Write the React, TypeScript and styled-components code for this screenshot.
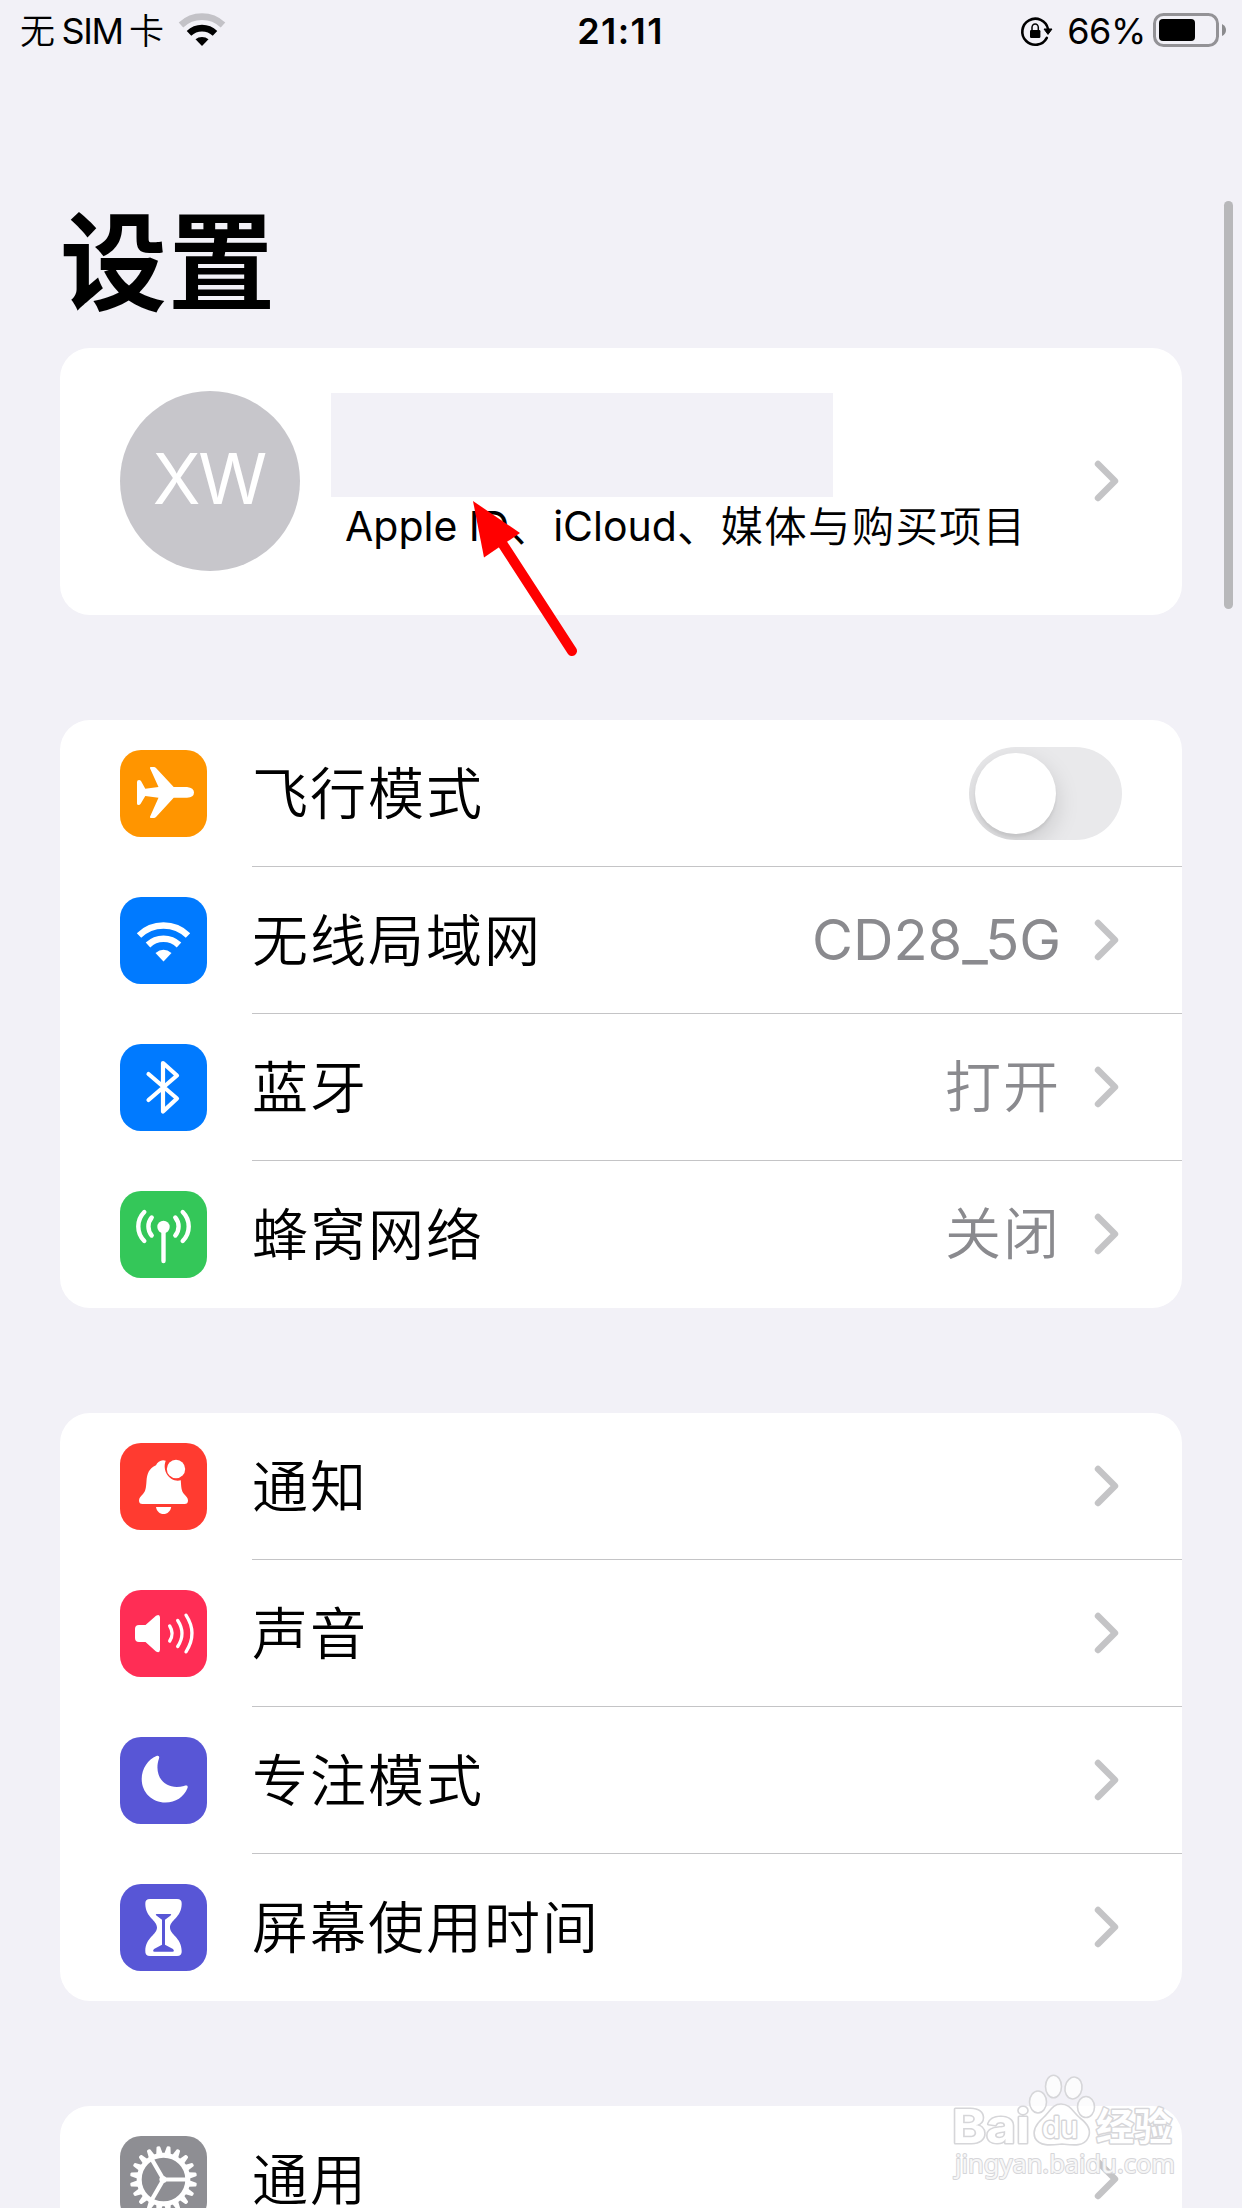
import React from "react";
import styled, { createGlobalStyle } from "styled-components";

const Global = createGlobalStyle`
  *, *::before, *::after { box-sizing: border-box; }
  body { margin: 0; background: #f2f1f7; }
`;

const Screen = styled.div`
  position: relative;
  width: 1242px;
  height: 2208px;
  overflow: hidden;
  background: #f2f1f7;
  color: #000;
  font-family: Inter, "Noto Sans CJK SC", sans-serif;
  -webkit-font-smoothing: antialiased;
`;

const StatusBar = styled.header`
  display: grid;
  grid-template-columns: 1fr auto 1fr;
  align-items: center;
  height: 62px;
  padding: 0 16px 0 20px;
`;

const StatusSide = styled.div<{ $end?: boolean }>`
  display: flex;
  align-items: center;
  justify-content: ${(p) => (p.$end ? "flex-end" : "flex-start")};
`;

const Carrier = styled.span`
  display: flex;
  align-items: center;
  gap: 6.5px;
  font-size: 35px;
  line-height: 40px;
  font-weight: 350;
  width: 143px;
  margin-right: 15px;
`;

const CarrierLatin = styled.span`
  font-size: 36px;
  font-weight: 400;
  letter-spacing: -1.4px;
`;

const Clock = styled.time`
  margin-right: 5px;
  font-size: 36px;
  line-height: 40px;
  font-weight: 600;
  letter-spacing: 1.4px;
`;

const Percent = styled.span`
  font-size: 36px;
  line-height: 40px;
  letter-spacing: -0.4px;
  margin: 0 7px 0 13px;
`;

const Title = styled.h1`
  margin: 121px 0 0 60px;
  height: 165px;
  font-family: "Noto Sans CJK SC", sans-serif;
  font-size: 107px;
  line-height: 146px;
  font-weight: 700;
  letter-spacing: 1px;
`;

const Groups = styled.main`
  display: flex;
  flex-direction: column;
  gap: 105px;
  padding: 0 60px;
`;

const Card = styled.section`
  border-radius: 30px;
  background: #fff;
`;

const Profile = styled.div`
  display: flex;
  align-items: center;
  height: 267px;
  padding: 0 59px 1px 60px;
`;

const Avatar = styled.div`
  display: flex;
  align-items: center;
  justify-content: center;
  width: 180px;
  height: 180px;
  padding: 0 2px 6px 0;
  border-radius: 50%;
  background: #c7c6cb;
  color: #fff;
  font-size: 70px;
  font-weight: 400;
  letter-spacing: -2px;
`;

const ProfileText = styled.div`
  flex: 1;
  align-self: flex-start;
  padding: 45px 0 0 31px;
`;

const NameMask = styled.div`
  width: 502px;
  height: 104px;
  background: #f2f1f7;
`;

const Subtitle = styled.div`
  display: flex;
  padding-left: 14px;
  font-size: 41px;
  line-height: 58px;
  white-space: nowrap;
`;

const Latin = styled.span`
  font-weight: 400;
`;

const Han = styled.span`
  margin-top: -2px;
  font-family: "Noto Sans CJK SC", sans-serif;
  font-weight: 350;
  font-size: 42.5px;
  letter-spacing: 1.2px;
`;

const Row = styled.div`
  display: flex;
  align-items: center;
  height: 147px;
  padding-left: 60px;
`;

const IconTile = styled.div<{ $color: string }>`
  flex: none;
  width: 87px;
  height: 87px;
  border-radius: 21px;
  background: ${(p) => p.$color};
  svg { display: block; }
`;

const RowBody = styled.div<{ $last?: boolean }>`
  flex: 1;
  display: flex;
  align-items: center;
  height: 147px;
  margin-left: 45px;
  padding-right: 59px;
  border-bottom: 1px solid ${(p) => (p.$last ? "transparent" : "#c4c4c6")};
`;

const Label = styled.span`
  flex: 1;
  padding-bottom: 7px;
  font-family: "Noto Sans CJK SC", sans-serif;
  font-size: 56px;
  line-height: 80px;
  font-weight: 350;
  letter-spacing: 2px;
`;

const Value = styled.span<{ $latin?: boolean }>`
  margin-right: 32px;
  color: #8a8a8e;
  font-size: 56px;
  line-height: 80px;
  font-weight: ${(p) => (p.$latin ? 400 : 350)};
  letter-spacing: ${(p) => (p.$latin ? 0 : 2)}px;
`;

const Switch = styled.div`
  width: 153px;
  height: 93px;
  padding: 6px;
  margin-right: 1px;
  border-radius: 47px;
  overflow: hidden;
  background: #e9e9eb;
`;

const Knob = styled.div`
  width: 81px;
  height: 81px;
  border-radius: 50%;
  background: #fff;
  box-shadow: 0 9px 24px rgba(0, 0, 0, 0.15), 0 3px 3px rgba(0, 0, 0, 0.06);
`;

const ScrollThumb = styled.div`
  position: absolute;
  left: 1224px;
  top: 201px;
  width: 9px;
  height: 408px;
  border-radius: 5px;
  background: #b8b8ba;
`;

const Pointer = styled.svg`
  position: absolute;
  left: 460px;
  top: 490px;
`;

const Watermark = styled.svg`
  position: absolute;
  left: 940px;
  top: 2060px;
`;

const Chevron = () => (
  <svg width="30" height="48" viewBox="0 0 30 48" fill="none">
    <path d="M5 7 L22 24 L5 41" stroke="#c4c4c6" strokeWidth="6.4" strokeLinecap="round" strokeLinejoin="round" />
  </svg>
);

const StatusWifi = () => (
  <svg width="48" height="36" viewBox="0 0 48 36" fill="none">
    <path d="M3 12 A30.5 30.5 0 0 1 45 12" stroke="#c3c2c7" strokeWidth="6.6" />
    <path d="M11 20.3 A19 19 0 0 1 37 20.3" stroke="#000" strokeWidth="6.6" />
    <path d="M17.5 26.3 A10 10 0 0 1 30.5 26.3 L24 33 Z" fill="#000" />
  </svg>
);

const RotationLock = () => (
  <svg width="34" height="32" viewBox="0 0 34 32" fill="none">
    <path d="M26.8 22.8 A13 13 0 1 1 28 14" stroke="#000" strokeWidth="2.6" strokeLinecap="round" />
    <path d="M24 14 L32 14 L28 19.4 Z" fill="#000" stroke="#000" strokeLinejoin="round" strokeWidth="1" />
    <rect x="10" y="15" width="10.4" height="8" rx="1.2" fill="#000" />
    <path d="M12 16 V12.6 A3 3.4 0 0 1 18.3 12.6 V16" stroke="#000" strokeWidth="1.5" />
  </svg>
);

const Battery = () => (
  <svg width="73" height="36" viewBox="0 0 73 36" fill="none">
    <rect x="1.5" y="1.5" width="63" height="31" rx="9" stroke="#939296" strokeWidth="3" />
    <rect x="6" y="6" width="36" height="22" rx="4" fill="#000" />
    <path d="M69 11 Q73 13 73 17 Q73 21 69 23 Z" fill="#8b8b8e" />
  </svg>
);

const Tile = ({ children }: { children: React.ReactNode }) => (
  <svg width="87" height="87" viewBox="0 0 87 87" fill="none">{children}</svg>
);

const Airplane = () => (
  <Tile>
    <path fill="#fff" d="M30 18.3 Q29.6 17 31 17 H34 Q35 17 36 18 L53.7 37 H67 Q74 38 74 42.4 Q74 47 67 47.8 H53.7 L36 67 Q35 68 34 68 H31 Q29.6 68 30 66.7 L38.5 47.8 L25.3 46 L20.5 54 Q19.7 55 18.6 55 Q17 55 17 53.5 V32 Q17 30 19 30 Q20.2 30 21 31 L25.3 38.8 L38.5 37 Z" />
  </Tile>
);

const Wifi = () => (
  <Tile>
    <path d="M19 38.5 A35 35 0 0 1 68 38.5" stroke="#fff" strokeWidth="6.3" />
    <path d="M28 48 A22.5 22.5 0 0 1 59 48" stroke="#fff" strokeWidth="6.6" />
    <path d="M35.5 56 Q43.5 49.5 51.5 56 L43.5 64.5 Z" fill="#fff" />
  </Tile>
);

const Bluetooth = () => (
  <Tile>
    <path d="M28.5 30 L57 54.5 L43 67.5 V19 L57 31.5 L28.5 56" stroke="#fff" strokeWidth="4.2" strokeLinecap="round" strokeLinejoin="round" />
  </Tile>
);

const Antenna = () => (
  <Tile>
    <g stroke="#fff" strokeLinecap="round">
      <path d="M43.5 38 V70" strokeWidth="4.4" />
      <path d="M31.7 26.5 A14 14 0 0 0 31.7 44.5" strokeWidth="4.4" />
      <path d="M55.3 26.5 A14 14 0 0 1 55.3 44.5" strokeWidth="4.4" />
      <path d="M24.3 21 A20.5 20.5 0 0 0 24.3 50" strokeWidth="4.4" />
      <path d="M62.7 21 A20.5 20.5 0 0 1 62.7 50" strokeWidth="4.4" />
    </g>
    <circle cx="43.5" cy="36" r="6.2" fill="#fff" />
  </Tile>
);

const Bell = () => (
  <Tile>
    <path fill="#fff" d="M45.7 17.8 C42 16 37.5 18.5 36 22.2 C29 25 27 31 26.5 38 C26 45 25.6 48 23 51 C20.6 53.4 19 55 19 57.5 Q19 61 22.5 61 H64.5 Q68 61 68 57.5 C68 55 66.3 53.4 64 51 C61.3 48 61.2 44 60.8 37.3 C51 40 41.5 29 45.7 17.8 Z" />
    <circle cx="56" cy="26" r="9.2" fill="#fff" />
    <path d="M36 64 H51.2 C50.5 68.3 47.5 71 43.5 71 C39.5 71 36.7 68.3 36 64 Z" fill="#fff" />
  </Tile>
);

const Speaker = () => (
  <Tile>
    <path fill="#fff" d="M19 35 H25.5 L36 25.7 Q40 23.5 40 27.5 V59.5 Q40 63.5 36 61.5 L25.5 52 H19 Q15 52 15 48 V39 Q15 35 19 35 Z" />
    <g stroke="#fff" strokeWidth="3.3" strokeLinecap="round">
      <path d="M49.7 36 Q54.5 43.5 49.7 51" />
      <path d="M57.7 30.5 Q66.3 43.5 57.7 56.5" />
      <path d="M66 25.2 Q78 43.5 66 61.8" />
    </g>
  </Tile>
);

const Moon = () => (
  <Tile>
    <path fill="#fff" d="M36.5 19 C39 18.2 39.6 20 39 21.5 C33 39 45 54 64 49 C66.5 48 68.3 48.5 67.5 51 C64 60 55.5 65.5 45.5 65.5 C32 65.5 21.7 55.5 21.7 42 C21.7 31.5 28 22.5 36.5 19 Z" />
  </Tile>
);

const Hourglass = () => (
  <Tile>
    <path fill="#fff" d="M30 15 H57 Q62 15 61.7 20 C61.3 34 50 36 50 43.5 C50 51 61.3 53 61.7 67 Q62 72 57 72 H30 Q25 72 25.3 67 C25.7 53 37 51 37 43.5 C37 36 25.7 34 25.3 20 Q25 15 30 15 Z" />
    <path fill="#5856d6" d="M36.7 30 H50.3 Q52.3 30 50 32 L45 35.7 V60.7 L53 65 Q55 67.8 52.5 67.8 H34.5 Q32 67.8 34 65 L42 60.7 V35.7 L37 32 Q34.7 30 36.7 30 Z" />
  </Tile>
);

const teeth = Array.from({ length: 20 }, (_, i) => i * 18 + 9);

const Gear = () => (
  <Tile>
    {teeth.map((a) => (
      <path key={a} fill="#fff" transform={`rotate(${a} 43.5 43.5)`} d="M40.2 18 L41.6 10.8 Q42 10 42.8 10 H44.2 Q45 10 45.4 10.8 L46.8 18 Z" />
    ))}
    <circle cx="43.5" cy="43.5" r="24.3" stroke="#fff" strokeWidth="5" />
    <path d="M43.5 43.5 H67 M43.5 43.5 L31.5 22.7 M43.5 43.5 L31.5 64.3" stroke="#fff" strokeWidth="4.2" />
    <circle cx="43" cy="43.5" r="3.6" fill="#fff" />
  </Tile>
);

type Item = {
  label: string;
  color: string;
  icon: React.ReactNode;
  value?: string;
  latin?: boolean;
  toggle?: boolean;
};

const network: Item[] = [
  { label: "飞行模式", color: "#ff9500", icon: <Airplane />, toggle: true },
  { label: "无线局域网", color: "#007aff", icon: <Wifi />, value: "CD28_5G", latin: true },
  { label: "蓝牙", color: "#007aff", icon: <Bluetooth />, value: "打开" },
  { label: "蜂窝网络", color: "#34c759", icon: <Antenna />, value: "关闭" },
];

const alerts: Item[] = [
  { label: "通知", color: "#ff3b30", icon: <Bell /> },
  { label: "声音", color: "#ff2d55", icon: <Speaker /> },
  { label: "专注模式", color: "#5856d6", icon: <Moon /> },
  { label: "屏幕使用时间", color: "#5856d6", icon: <Hourglass /> },
];

const general: Item[] = [{ label: "通用", color: "#8e8e93", icon: <Gear /> }];

const Group = ({ items }: { items: Item[] }) => (
  <Card>
    {items.map((item, i) => (
      <Row key={item.label}>
        <IconTile $color={item.color}>{item.icon}</IconTile>
        <RowBody $last={i === items.length - 1}>
          <Label>{item.label}</Label>
          {item.value && <Value $latin={item.latin}>{item.value}</Value>}
          {item.toggle ? <Switch><Knob /></Switch> : <Chevron />}
        </RowBody>
      </Row>
    ))}
  </Card>
);

export default function App() {
  return (
    <Screen>
      <Global />
      <StatusBar>
        <StatusSide>
          <Carrier>无<CarrierLatin>SIM</CarrierLatin>卡</Carrier>
          <StatusWifi />
        </StatusSide>
        <Clock>21:11</Clock>
        <StatusSide $end>
          <RotationLock />
          <Percent>66%</Percent>
          <Battery />
        </StatusSide>
      </StatusBar>
      <Title>设置</Title>
      <Groups>
        <Card>
          <Profile>
            <Avatar>XW</Avatar>
            <ProfileText>
              <NameMask />
              <Subtitle>
                <Latin>Apple ID</Latin>
                <Han>、</Han>
                <Latin>iCloud</Latin>
                <Han>、媒体与购买项目</Han>
              </Subtitle>
            </ProfileText>
            <Chevron />
          </Profile>
        </Card>
        <Group items={network} />
        <Group items={alerts} />
        <Group items={general} />
      </Groups>
      <ScrollThumb />
      <Pointer width="130" height="180" viewBox="460 490 130 180">
        <path d="M502 543 L572 651" stroke="#f00" strokeWidth="10" strokeLinecap="round" />
        <path d="M473 501 L520 533 L484 557.5 Z" fill="#f00" />
      </Pointer>
      <Watermark width="260" height="130" viewBox="940 2060 260 130">
        <g fill="#fff" fillOpacity="0.75" stroke="#d6d6d9" strokeWidth="1.6">
          <ellipse cx="1038" cy="2102" rx="8.5" ry="11" />
          <ellipse cx="1053.5" cy="2086.5" rx="8" ry="11.3" />
          <ellipse cx="1073.5" cy="2088" rx="8.5" ry="11" transform="rotate(10 1073.5 2088)" />
          <ellipse cx="1086" cy="2107" rx="8.5" ry="10.5" />
          <path d="M1061 2104 C1070 2104 1073 2112 1080 2118 C1088 2124 1092 2130 1088 2138 C1084 2147 1072 2145 1062 2144 C1052 2145 1040 2147 1035 2138 C1032 2130 1036 2124 1043 2118 C1050 2112 1052 2104 1061 2104 Z" />
        </g>
        <g fill="#fff" stroke="#d6d6d9" strokeWidth="3" paintOrder="stroke" strokeLinejoin="round">
          <text x="952" y="2143" fontFamily="Inter" fontWeight="700" fontSize="47" textLength="78" lengthAdjust="spacingAndGlyphs">Bai</text>
          <text x="1042" y="2138" fontFamily="Inter" fontWeight="500" fontSize="30" textLength="36" lengthAdjust="spacingAndGlyphs">du</text>
          <text x="1096" y="2140" fontFamily="Noto Sans CJK SC" fontWeight="700" fontSize="38" textLength="76" lengthAdjust="spacingAndGlyphs">经验</text>
          <text x="955" y="2173" fontFamily="Noto Sans" fontSize="26" textLength="220" lengthAdjust="spacingAndGlyphs" fillOpacity="0.8" strokeWidth="2">jingyan.baidu.com</text>
        </g>
      </Watermark>
    </Screen>
  );
}
